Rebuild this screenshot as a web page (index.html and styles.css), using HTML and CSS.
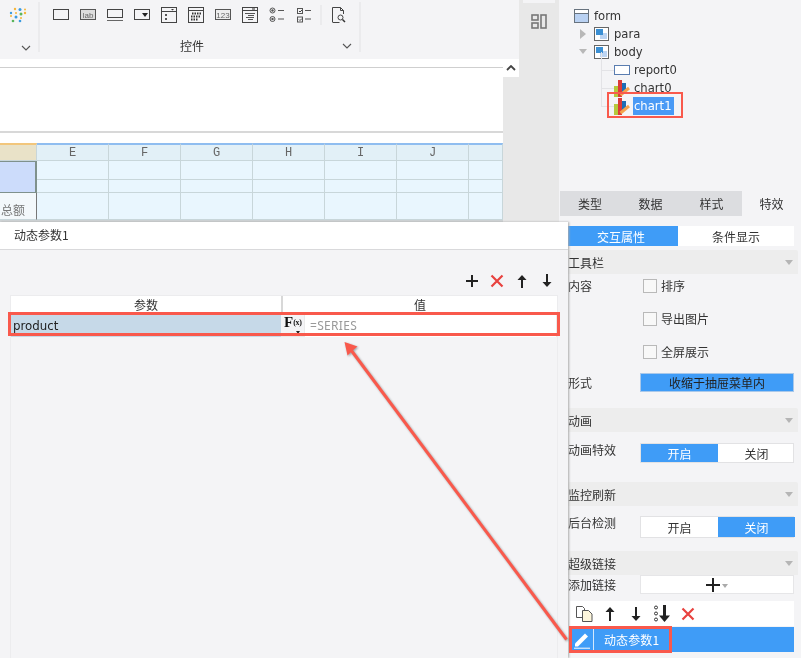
FILE: index.html
```html
<!DOCTYPE html>
<html lang="zh">
<head>
<meta charset="utf-8">
<title>动态参数</title>
<link rel="stylesheet" href="styles.css">
</head>
<body>
<div class="app">
  <main class="editor">
    <div class="toolbar">
      <div class="tb-group tb-first">
        <svg class="ico-logo" viewBox="0 0 18 16" width="18" height="16"><g>
          <circle cx="6" cy="2" r="1.2" fill="#f5b63a"/><circle cx="11" cy="2.500" r="1.500" fill="#3a9be0"/><circle cx="16" cy="2.500" r="1" fill="#f5b63a"/>
          <circle cx="2" cy="6" r="1.200" fill="#3a9be0"/><circle cx="7" cy="6" r="1" fill="#f5b63a"/><circle cx="12" cy="7" r="1.500" fill="#5ab55a"/><circle cx="16" cy="6" r="1.200" fill="#f5b63a"/>
          <circle cx="2" cy="9" r="1" fill="#f5b63a"/><circle cx="7" cy="10" r="1.500" fill="#3a9be0"/><circle cx="12" cy="11" r="1" fill="#f5b63a"/>
          <circle cx="4" cy="14" r="1.300" fill="#5ab55a"/><circle cx="11" cy="14" r="1.300" fill="#3a9be0"/>
        </g></svg>
        <svg class="chev" viewBox="0 0 10 6" width="10" height="6"><path d="M1 1l4 4 4-4" fill="none" stroke="#555" stroke-width="1.100"/></svg>
      </div>
      <div class="tb-group tb-controls">
        <div class="tb-icons">
          <svg viewBox="0 0 16 16" width="16" height="16"><rect x=".5" y="2.500" width="15" height="10" fill="none" stroke="#444"/></svg>
          <svg viewBox="0 0 16 16" width="16" height="16"><rect x=".5" y="2.500" width="15" height="10" fill="#ddd" stroke="#555"/><text x="8" y="11" class="svg-small" text-anchor="middle">lab</text></svg>
          <svg viewBox="0 0 16 16" width="16" height="16"><rect x=".5" y="2.500" width="15" height="8" fill="none" stroke="#444"/><path d="M0 13.500h16" stroke="#666"/></svg>
          <svg viewBox="0 0 16 16" width="16" height="16"><rect x=".5" y="2.500" width="15" height="10" fill="none" stroke="#444"/><path d="M8 6h6l-3 4z" fill="#222"/></svg>
          <svg viewBox="0 0 16 16" width="16" height="16"><rect x=".5" y=".5" width="15" height="15" fill="none" stroke="#444"/><path d="M1 4.500h14" stroke="#444"/><path d="M10 2h3l-1.500 1.500z" fill="#333"/><rect x="4" y="7" width="2" height="2" fill="#555"/><rect x="4" y="11" width="2" height="2" fill="#555"/></svg>
          <svg viewBox="0 0 16 16" width="16" height="16"><rect x=".5" y=".5" width="15" height="15" fill="none" stroke="#444"/><path d="M1 3.500h14" stroke="#444"/><path d="M4 6.500h9M3 9.500h10M3 12.500h7" stroke="#333" stroke-width="2" stroke-dasharray="1.500 1"/></svg>
          <svg viewBox="0 0 16 16" width="16" height="16"><rect x=".5" y="2.500" width="15" height="10" fill="#eee" stroke="#555"/><text x="8" y="11" class="svg-small" text-anchor="middle">123</text></svg>
          <svg viewBox="0 0 16 16" width="16" height="16"><rect x=".5" y=".5" width="15" height="15" fill="none" stroke="#444"/><path d="M1 3.500h14" stroke="#444"/><path d="M10 2h3" stroke="#333"/><path d="M3 6.500h10M6 8.500h6M4 10.500h8M6 12.500h5" stroke="#555"/></svg>
          <svg viewBox="0 0 16 16" width="16" height="16"><circle cx="3.500" cy="3.500" r="2.500" fill="none" stroke="#555"/><circle cx="3.500" cy="3.500" r="1.200" fill="#555"/><circle cx="3.500" cy="12" r="2.500" fill="none" stroke="#555"/><circle cx="3.500" cy="12" r="1.200" fill="#555"/><path d="M9 3.500h6M9 12h6" stroke="#555"/></svg>
          <svg viewBox="0 0 16 16" width="16" height="16"><rect x="1.500" y="1.500" width="5" height="5" fill="none" stroke="#555"/><rect x="1.500" y="10" width="5" height="5" fill="none" stroke="#555"/><path d="M3 4l1 1 2-2M3 12.500l1 1 2-2" fill="none" stroke="#444"/><path d="M9 3.500h6M9 12h6" stroke="#555"/></svg>
          <i class="tb-sep"></i>
          <svg class="tb-preview" viewBox="0 0 14 16" width="14" height="16"><path d="M.5 15V.5h8l3 3V7M.5 15.500h7M8.500.5v3h3" fill="none" stroke="#444"/><circle cx="8.500" cy="10.500" r="2.500" fill="none" stroke="#444"/><path d="M10.500 12.500l2.500 2.500" stroke="#333" stroke-width="1.500"/></svg>
        </div>
        <div class="tb-label-row">
          <span class="tb-label">控件</span>
          <svg class="chev" viewBox="0 0 10 6" width="10" height="6"><path d="M1 1l4 4 4-4" fill="none" stroke="#555" stroke-width="1.100"/></svg>
        </div>
      </div>
    </div>

    <div class="canvas">
      <div class="canvas-main">
        <div class="blank-top"></div>
        <div class="blank-area"></div>
        <div class="blank-gap"></div>
        <div class="sheet">
          <div class="cell head head-d"><span class="head-d-text">D</span></div>
          <div class="cell head">E</div><div class="cell head">F</div><div class="cell head">G</div><div class="cell head">H</div><div class="cell head">I</div><div class="cell head">J</div><div class="cell head"></div>
          <div class="cell selected"></div>
          <div class="cell"></div><div class="cell"></div><div class="cell"></div><div class="cell"></div><div class="cell"></div><div class="cell"></div><div class="cell"></div>
          <div class="cell"></div><div class="cell"></div><div class="cell"></div><div class="cell"></div><div class="cell"></div><div class="cell"></div><div class="cell"></div>
          <div class="cell total">总额</div>
          <div class="cell"></div><div class="cell"></div><div class="cell"></div><div class="cell"></div><div class="cell"></div><div class="cell"></div><div class="cell"></div>
        </div>
      </div>
      <div class="scrollbar">
        <div class="scroll-up"><svg viewBox="0 0 10 6" width="10" height="6"><path d="M1 5l4-4 4 4" fill="none" stroke="#444" stroke-width="1.800"/></svg></div>
      </div>
    </div>
  </main>

  <div class="strip">
    <div class="strip-tab"></div>
    <svg class="strip-ico" viewBox="0 0 16 15" width="16" height="15"><rect x="1" y="1" width="6" height="5" fill="none" stroke="#777" stroke-width="1.600"/><rect x="1" y="9" width="6" height="5" fill="none" stroke="#777" stroke-width="1.600"/><rect x="10" y="1" width="5" height="13" fill="none" stroke="#777" stroke-width="1.600"/></svg>
  </div>

  <aside class="side">
    <div class="tree">
      <div class="tree-row d0">
        <svg viewBox="0 0 15 14" width="15" height="14"><rect x=".5" y=".5" width="14" height="13" fill="#b9d1f2" stroke="#67727e"/><rect x="1" y="1" width="13" height="3" fill="#fff"/><path d="M1 4.500h13" stroke="#67727e"/></svg>
        <span>form</span>
      </div>
      <div class="tree-row d1">
        <svg class="tw" viewBox="0 0 8 10" width="8" height="10"><path d="M1 0l6 5-6 5z" fill="#b8b8b8"/></svg>
        <svg viewBox="0 0 15 14" width="15" height="14"><rect x=".5" y=".5" width="14" height="13" fill="#fff" stroke="#666"/><rect x="6" y="6" width="7" height="6" fill="#bcd4f2"/><rect x="2" y="2" width="7" height="6" fill="#3b8fd3"/></svg>
        <span>para</span>
      </div>
      <div class="tree-row d1">
        <svg class="tw" viewBox="0 0 8 6" width="8" height="6"><path d="M0 0h8l-4 5z" fill="#b8b8b8"/></svg>
        <svg viewBox="0 0 15 14" width="15" height="14"><rect x=".5" y=".5" width="14" height="13" fill="#fff" stroke="#666"/><rect x="6" y="6" width="7" height="6" fill="#bcd4f2"/><rect x="2" y="2" width="7" height="6" fill="#3b8fd3"/></svg>
        <span>body</span>
      </div>
      <div class="tree-row d2">
        <svg viewBox="0 0 16 11" width="16" height="11"><rect x=".5" y=".5" width="15" height="9" fill="#fff" stroke="#5a7db0"/></svg>
        <span>report0</span>
      </div>
      <div class="tree-row d2">
        <svg viewBox="0 0 16 17" width="16" height="17"><rect x="0" y="6" width="5" height="11" fill="#b6c93c"/><rect x="4" y="0" width="4" height="17" fill="#dd3b37"/><rect x="8" y="3" width="4" height="9" fill="#1d6db5"/><path d="M6.500 15l8.500-7" stroke="#f4a24c" stroke-width="3"/></svg>
        <span>chart0</span>
      </div>
      <div class="tree-row d2">
        <svg viewBox="0 0 16 17" width="16" height="17"><rect x="0" y="6" width="5" height="11" fill="#b6c93c"/><rect x="4" y="0" width="4" height="17" fill="#dd3b37"/><rect x="8" y="3" width="4" height="9" fill="#1d6db5"/><path d="M6.500 15l8.500-7" stroke="#f4a24c" stroke-width="3"/></svg>
        <span class="tree-selected">chart1</span>
      </div>
    </div>

    <nav class="tabs">
      <span class="tab">类型</span><span class="tab">数据</span><span class="tab">样式</span><span class="tab tab-on">特效</span>
    </nav>

    <div class="subtabs">
      <span class="subtab sub-on">交互属性</span><span class="subtab">条件显示</span>
    </div>

    <section class="props">
      <header class="sec"><span>工具栏</span><i class="tri"></i></header>
      <div class="row check-first"><span class="lab">内容</span><label class="chk"><i class="box"></i>排序</label></div>
      <div class="row check-next"><span class="lab"></span><label class="chk"><i class="box"></i>导出图片</label></div>
      <div class="row check-next"><span class="lab"></span><label class="chk"><i class="box"></i>全屏展示</label></div>
      <div class="row row-form"><span class="lab">形式</span><div class="btn-drawer">收缩于抽屉菜单内</div></div>

      <header class="sec sec-anim"><span>动画</span><i class="tri"></i></header>
      <div class="row row-anim"><span class="lab lab-top">动画特效</span>
        <div class="toggle"><span class="on">开启</span><span>关闭</span></div>
      </div>

      <header class="sec sec-mon"><span>监控刷新</span><i class="tri"></i></header>
      <div class="row row-mon"><span class="lab lab-top">后台检测</span>
        <div class="toggle"><span>开启</span><span class="on">关闭</span></div>
      </div>

      <header class="sec sec-link"><span>超级链接</span><i class="tri"></i></header>
      <div class="row row-add"><span class="lab">添加链接</span>
        <div class="add-btn">
          <svg viewBox="0 0 14 14" width="14" height="14"><path d="M7 0v14M0 7h14" stroke="#222" stroke-width="2"/></svg>
          <i class="add-tri"></i>
        </div>
      </div>

      <div class="link-tools">
        <svg viewBox="0 0 17 16" width="17" height="16"><path d="M.5.500h6l2 2v9h-8z" fill="#fff" stroke="#555"/><path d="M6.500 4.500h6l3.500 3.500v7.500h-9.500z" fill="#fdf6dc" stroke="#555"/></svg>
        <svg class="lt-up" viewBox="0 0 12 16" width="12" height="16"><path d="M6 15V3" stroke="#222" stroke-width="2"/><path d="M1.500 6L6 1l4.500 5z" fill="#222"/></svg>
        <svg class="lt-down" viewBox="0 0 12 16" width="12" height="16"><path d="M6 1v12" stroke="#222" stroke-width="2"/><path d="M1.500 10L6 15l4.500-5z" fill="#222"/></svg>
        <svg class="lt-bottom" viewBox="0 0 16 17" width="16" height="17"><circle cx="2" cy="2.500" r="1.500" fill="none" stroke="#333"/><circle cx="2" cy="8.500" r="1.500" fill="none" stroke="#333"/><circle cx="2" cy="14.500" r="1.500" fill="none" stroke="#333"/><path d="M10.500 0v12" stroke="#222" stroke-width="3"/><path d="M5 10.500h11L10.500 17z" fill="#222"/></svg>
        <svg class="lt-del" viewBox="0 0 14 14" width="14" height="14"><path d="M1.500 1.500l11 11M12.500 1.500l-11 11" stroke="#e8423f" stroke-width="2.200"/></svg>
      </div>
      <div class="link-item">
        <svg viewBox="0 0 18 18" width="18" height="18"><path d="M2 12.500L12 2.500l3 3-10 10H2z" fill="#fff"/><path d="M1 17.200h16" stroke="#fff"/></svg>
        <i class="link-div"></i>
        <span>动态参数1</span>
      </div>
    </section>
  </aside>

  <section class="dialog">
    <header class="dlg-head">动态参数1</header>
    <div class="dlg-tools">
      <svg viewBox="0 0 12 12" width="12" height="12"><path d="M6 0v12M0 6h12" stroke="#222" stroke-width="2"/></svg>
      <svg viewBox="0 0 14 14" width="14" height="14"><path d="M1.500 1.500l11 11M12.500 1.500l-11 11" stroke="#e8423f" stroke-width="2.200"/></svg>
      <svg viewBox="0 0 12 14" width="12" height="14"><path d="M6 14V3" stroke="#222" stroke-width="2"/><path d="M1.500 6L6 1l4.500 5z" fill="#222"/></svg>
      <svg viewBox="0 0 12 14" width="12" height="14"><path d="M6 0v11" stroke="#222" stroke-width="2"/><path d="M1.500 8L6 13l4.500-5z" fill="#222"/></svg>
    </div>
    <div class="grid">
      <div class="grid-head"><span class="gh gh-a">参数</span><span class="gh">值</span></div>
      <div class="grid-row">
        <div class="g-name">product</div>
        <div class="g-fx"><span class="fx-f">F</span><span class="fx-x">(x)</span><i class="fx-tri"></i></div>
        <div class="g-val">=SERIES</div>
      </div>
    </div>
  </section>

  <i class="mark mark-tree"></i>
  <i class="mark mark-row"></i>
  <i class="mark mark-link"></i>
  <svg class="arrow" viewBox="0 0 801 658" width="801" height="658">
    <path d="M566.500 639.500L351 350" stroke="#f9594c" stroke-width="3" fill="none"/>
    <path d="M344.500 342L357.500 346.500 352 351 347.500 355.500z" fill="#f9594c"/>
  </svg>
</div>
</body>
</html>
```
FILE: styles.css
```css
* { box-sizing: border-box; }
html, body { margin: 0; padding: 0; }
body {
  width: 801px; height: 658px; overflow: hidden;
  font-family: "Noto Sans CJK SC", "Noto Sans", sans-serif;
  font-size: 12px; color: #333; background: #f4f4f6;
}
.app {
  position: relative; width: 801px; height: 658px; overflow: hidden;
  display: grid; grid-template-columns: 519px 40px 242px;
  filter: blur(.35px);
}
i { display: block; font-style: normal; }
svg { display: block; flex: none; }

/* toolbar */
.editor { display: flex; flex-direction: column; min-width: 0; }
.toolbar { height: 59px; background: #f4f4f6; display: flex; padding-top: 2px; }
.tb-group { border-right: 2px solid #ebebed; height: 50px; }
.tb-first {
  width: 40px; display: flex; flex-direction: column; align-items: flex-start;
  padding: 5px 0 0 9px;
}
.tb-first .chev { margin: 22px 0 0 12px; }
.tb-controls { width: 321px; padding-left: 13px; }
.tb-icons { display: flex; gap: 11px; align-items: center; height: 24px; padding-top: 2px; }
.tb-sep { width: 2px; height: 20px; background: #ebebed; margin-left: -3px; }
.tb-preview { margin-left: -1px; }
.tb-label-row { display: flex; align-items: center; justify-content: space-between; padding: 14px 7px 0 0; height: 26px; }
.tb-label { margin-left: 127px; font-size: 12px; color: #333; line-height: 18px; }
.svg-small { font-family: "Liberation Sans", sans-serif; font-size: 8px; fill: #666; }

/* canvas */
.canvas { flex: 1; display: flex; background: #f6f6f7; min-height: 0; }
.canvas-main { width: 503px; display: flex; flex-direction: column; }
.blank-top { height: 8px; background: #fff; }
.blank-area { height: 66px; background: #fff; border-top: 1px solid #cfcfcf; border-bottom: 2px solid #d8d8d8; }
.blank-gap { height: 10px; background: #fff; }
.scrollbar { width: 16px; background: #e8e8e8; }
.scroll-up { height: 18px; background: #fff; display: flex; align-items: center; justify-content: center; }

/* sheet */
.sheet {
  display: grid;
  grid-template-columns: 37px repeat(6, 72px) 34px;
  grid-template-rows: 18px 19px 13px 27px;
  background: #e9f6fe;
  border-bottom: 2px solid #cfd3d5;
  height: 79px;
}
.cell { border-right: 1px solid #c8d6da; border-bottom: 1px solid #c8d6da; }
.head {
  background: #e2f0f7; border-top: 2px solid #8fbdf0;
  display: flex; align-items: center; justify-content: center;
  font-family: "Liberation Mono", monospace; font-size: 12px; color: #666;
}
.head-d { background: #e9e2c8; border-top-color: #f2c67c; justify-content: flex-start; overflow: hidden; }
.head-d-text { margin-left: -7px; }
.selected {
  grid-row: span 2; background: #ccdcfb;
  border-right: 2px solid #7f918c; border-bottom: 1px solid #7f918c; border-top: 1px solid #7f918c;
}
.total {
  background: #f3f8fb; color: #777; font-size: 12px; line-height: 27px; padding-left: 1px;
  border-right: 1px solid #777; border-bottom: 1px solid #c8d6da; padding-top: 3px;
}

/* strip */
.strip { background: #e8e8e8; display: flex; flex-direction: column; align-items: center; }
.strip-tab { width: 32px; height: 3px; background: #f4f4f6; }
.strip-ico { margin-top: 11px; }

/* tree */
.side { display: flex; flex-direction: column; background: #f4f4f6; min-width: 0; }
.tree { height: 191px; padding-top: 7px; }
.tree-row { position: relative; height: 18px; display: flex; align-items: center; font-family: "DejaVu Sans", sans-serif; font-size: 11.600px; color: #333; }
.d0 { padding-left: 15px; gap: 5px; }
.d1 { padding-left: 20px; gap: 5px; }
.d1 .tw { margin-right: 2px; }
.d2 { padding-left: 55px; gap: 4px; }
.d2::before {
  content: ""; position: absolute; left: 42px; top: -9px; width: 12px; height: 18px;
  border-left: 1px solid #e3e3e6; border-bottom: 1px solid #e3e3e6;
}
.tree-selected { background: #4a9af5; color: #fff; width: 41px; height: 18px; line-height: 18px; margin-left: -1px; padding-left: 1px; }

/* tabs */
.tabs { height: 25px; margin-left: 1px; display: grid; grid-template-columns: 60px 61px 61px 59px; background: #dcdde0; }
.tab { display: flex; align-items: center; justify-content: center; color: #333; }
.tab-on { background: #f4f4f6; }
.subtabs { margin: 10px 7px 0 9px; height: 20px; display: grid; grid-template-columns: 110px 116px; background: #fff; }
.subtab { display: flex; align-items: center; justify-content: center; }
.sub-on { background: #3f9cf7; color: #fff; padding-right: 4px; }

/* props */
.props { padding: 4px 0 0 8px; display: flex; flex-direction: column; }
.sec {
  height: 24px; width: 230px; margin-left: 1px; background: #ededed; display: flex; align-items: center;
  justify-content: space-between; padding-right: 5px; border-radius: 2px 2px 0 0;
}
.tri { width: 0; height: 0; border-left: 4px solid transparent; border-right: 4px solid transparent; border-top: 5px solid #b5b5b5; }
.row { display: flex; padding-left: 1px; align-items: center; }
.lab { width: 72px; flex: none; }
.lab-top { align-self: flex-start; line-height: 13px; }
.check-first { height: 23px; }
.check-next { height: 23px; margin-top: 10px; }
.chk { display: flex; align-items: center; gap: 4px; margin-left: 3px; }
.box { width: 14px; height: 14px; border: 1px solid #b9b9b9; background: #f8f8f8; }
.row-form { margin-top: 10px; height: 19px; }
.btn-drawer {
  width: 154px; height: 19px; background: #3f9cf7; border: 1px solid #a9c8ea; color: #222;
  text-align: center; line-height: 17px;
}
.sec-anim { margin-top: 16px; }
.row-anim { margin-top: 11px; height: 20px; }
.sec-mon { margin-top: 19px; }
.row-mon { margin-top: 10px; height: 22px; }
.sec-link { margin-top: 13px; }
.toggle { width: 154px; height: 100%; display: grid; grid-template-columns: 77px 77px; background: #fff; border: 1px solid #e2e2e4; }
.toggle span { display: flex; align-items: center; justify-content: center; }
.toggle .on { background: #3f9cf7; color: #fff; }
.row-add { height: 19px; }
.add-btn { width: 154px; height: 19px; background: #fff; border: 1px solid #e6e6e8; display: flex; align-items: center; justify-content: center; gap: 2px; }
.add-tri { width: 0; height: 0; border-left: 3px solid transparent; border-right: 3px solid transparent; border-top: 4px solid #aaa; margin-top: 2px; }

.link-tools { margin: 7px 0 0 3px; width: 224px; height: 25px; background: #fff; display: flex; align-items: center; padding-left: 6px; }
.lt-up { margin-left: 11px; }
.lt-down { margin-left: 14px; }
.lt-bottom { margin-left: 12px; }
.lt-del { margin-left: 11px; }
.link-item { margin: 1px 0 0 3px; width: 224px; height: 25px; background: #3f9cf7; color: #fff; display: flex; align-items: center; padding-left: 3px; }
.link-div { width: 1px; height: 21px; background: #d4e8fc; margin-left: 2px; }
.link-item span { margin-left: 10px; letter-spacing: .1px; }

/* dialog */
.dialog {
  position: absolute; left: 0; top: 222px; width: 568px; height: 436px;
  background: #f4f4f6; box-shadow: 1px 0 2px #aaa; display: flex; flex-direction: column; z-index: 2;
}
.dlg-head { height: 28px; background: #fff; border-bottom: 1px solid #d9d9db; padding-left: 14px; line-height: 26px; color: #333; }
.dlg-tools { height: 45px; display: flex; align-items: center; justify-content: flex-end; gap: 13px; padding: 16px 15px 0 0; }
.dlg-tools svg:nth-child(2) { margin: 0 -1px; }
.grid { flex: 1; margin-left: 10px; width: 548px; border: 1px solid #ececee; border-bottom: 0; display: flex; flex-direction: column; }
.grid-head { height: 17px; background: #fff; display: grid; grid-template-columns: 272px 1fr; text-align: center; font-size: 12px; line-height: 18px; overflow: hidden; color: #333; }
.gh-a { border-right: 2px solid #d8d8d8; }
.grid-row { height: 24px; display: flex; padding-top: 2px; background: #eaeaea; }
.g-name { width: 270px; background: #c6d9e8; font-family: "DejaVu Sans", sans-serif; font-size: 11.800px; line-height: 22px; padding-left: 2px; color: #222; }
.g-fx { width: 23px; height: 19px; background: #f4f4f6; padding-left: 3px; font-family: "Liberation Serif", serif; color: #111; display: flex; position: relative; }
.fx-f { font-size: 15px; font-weight: 700; line-height: 15px; }
.fx-x { font-size: 8px; font-weight: 700; line-height: 15px; letter-spacing: -.3px; }
.fx-tri { position: absolute; left: 15px; bottom: 0; border-left: 2px solid transparent; border-right: 2px solid transparent; border-top: 3px solid #222; }
.g-val { width: 251px; margin-left: 1px; background: #fff; color: #999; font-family: "Noto Sans", sans-serif; font-size: 12px; line-height: 22px; padding-left: 5px; letter-spacing: .3px; }

/* annotations */
.mark { position: absolute; border: 3px solid #f9594c; z-index: 3; }
.mark-tree { left: 607px; top: 92px; width: 76px; height: 26px; border-width: 2.500px; }
.mark-row { left: 8px; top: 312px; width: 552px; height: 24px; }
.mark-link { left: 569px; top: 626px; width: 103px; height: 27px; }
.arrow { position: absolute; left: 0; top: 0; z-index: 4; filter: drop-shadow(1px 1px 1px rgba(0,0,0,.35)); }
```
